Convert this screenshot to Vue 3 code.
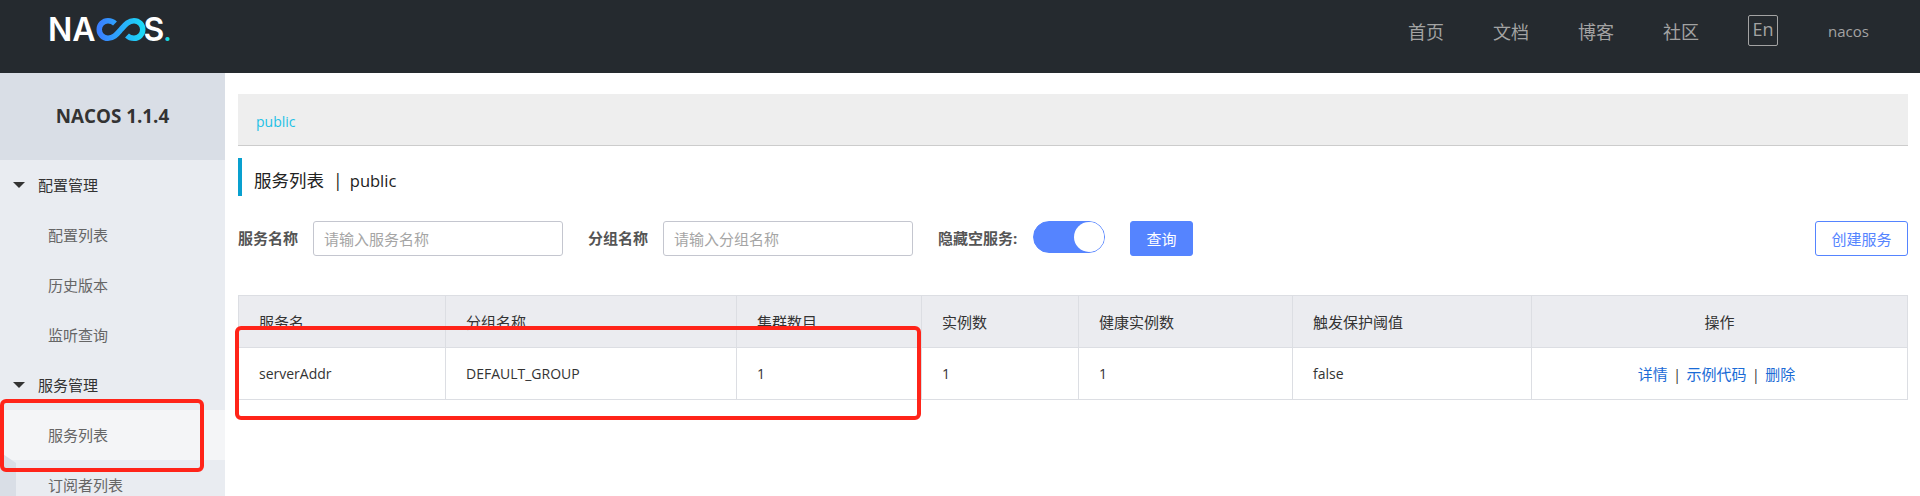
<template>
  <div class="page">
    <header class="topbar">
      <div class="logo">
        <span>NA</span>
        <svg class="logo-loop" width="50" height="23" viewBox="0 0 50 23" fill="none">
          <defs>
            <linearGradient id="loopGrad" x1="0" y1="0" x2="1" y2="0">
              <stop offset="0" stop-color="#3a7fff" />
              <stop offset="1" stop-color="#1bd8f6" />
            </linearGradient>
          </defs>
          <path d="M19 5.500C17 3.500 15 2.750 12 2.750A8.750 8.750 0 0 0 12 20.250C18 20.250 21 16 25 11.500C29 7 32 2.750 38 2.750A8.750 8.750 0 0 1 38 20.250C35 20.250 33 19.500 31 17.500" stroke="url(#loopGrad)" stroke-width="5.500" />
        </svg>
        <span>S</span><span class="logo-dot">.</span>
      </div>
      <nav class="topnav">
        <a v-for="item in topLinks" :key="item">{{ item }}</a>
        <span class="lang">En</span>
        <span class="user">nacos</span>
      </nav>
    </header>

    <div class="body">
      <aside class="sidebar">
        <div class="side-title">NACOS 1.1.4</div>
        <ul class="side-menu">
          <template v-for="group in menu" :key="group.name">
            <li class="group"><i class="caret"></i>{{ group.name }}</li>
            <li v-for="sub in group.items" :key="sub" class="sub" :class="{ active: sub === '服务列表' }">{{ sub }}</li>
          </template>
        </ul>
        <div class="fold"></div>
      </aside>

      <main class="main">
        <div class="crumb"><a>public</a></div>
        <h1 class="title">服务列表&nbsp; |&nbsp; <span class="title-ns">public</span></h1>

        <form class="filters" @submit.prevent>
          <label>服务名称</label>
          <input class="field" placeholder="请输入服务名称" />
          <label class="second">分组名称</label>
          <input class="field" placeholder="请输入分组名称" />
          <label class="third">隐藏空服务:</label>
          <span class="switch"><i></i></span>
          <button class="btn primary">查询</button>
          <button class="btn ghost">创建服务</button>
        </form>

        <table class="grid">
          <thead>
            <tr>
              <th v-for="col in columns" :key="col">{{ col }}</th>
            </tr>
          </thead>
          <tbody>
            <tr>
              <td>serverAddr</td>
              <td>DEFAULT_GROUP</td>
              <td>1</td>
              <td>1</td>
              <td>1</td>
              <td>false</td>
              <td class="ops">
                <a>详情</a><span class="sep">|</span><a>示例代码</a><span class="sep">|</span><a>删除</a>
              </td>
            </tr>
          </tbody>
        </table>
      </main>
    </div>

    <div class="mark mark-menu"></div>
    <div class="mark mark-row"></div>
  </div>
</template>

<script setup>
const topLinks = ['首页', '文档', '博客', '社区']

const menu = [
  { name: '配置管理', items: ['配置列表', '历史版本', '监听查询'] },
  { name: '服务管理', items: ['服务列表', '订阅者列表'] }
]

const columns = ['服务名', '分组名称', '集群数目', '实例数', '健康实例数', '触发保护阈值', '操作']
</script>

<style>
html,
body {
  margin: 0;
  background: #fff;
  overflow: hidden;
}
</style>

<style scoped>
.page {
  position: relative;
  height: 496px;
  overflow: hidden;
  font-family: "Open Sans", "Noto Sans CJK SC", sans-serif;
  font-size: 14px;
  color: #333;
}

.topbar {
  height: 73px;
  background: #252a2f;
  display: flex;
  justify-content: space-between;
  align-items: center;
}

.logo {
  display: flex;
  align-items: center;
  margin: 0 0 14px 48px;
  font-family: Inter, sans-serif;
  font-size: 32px;
  font-weight: 600;
  line-height: 23px;
  color: #fff;
}

.logo-loop {
  margin: 0 -2px 0 0;
}

.logo-dot {
  margin: 5px 0 0 -1px;
  color: #1bd8e0;
  font-size: 24px;
  font-weight: 700;
}

.topnav {
  display: flex;
  align-items: center;
  margin: 0 50px 12px 0;
  font-size: 18px;
  color: #a3a3a3;
}

.topnav a {
  width: 36px;
  margin-right: 49px;
  white-space: nowrap;
}

.lang {
  box-sizing: border-box;
  width: 30px;
  height: 31px;
  margin-right: 50px;
  border: 1px solid #a3a3a3;
  border-radius: 2px;
  text-align: center;
  line-height: 27px;
}

.user {
  width: 42px;
  font-size: 15px;
}

.body {
  display: flex;
}

.sidebar {
  position: relative;
  width: 225px;
  height: 423px;
  flex: none;
  background: #e9ecf1;
}

.side-title {
  height: 87px;
  background: #d9dee6;
  text-align: center;
  font-size: 18.800px;
  font-weight: 700;
  line-height: 87px;
  color: #333;
}

.side-menu {
  list-style: none;
  margin: 0;
  padding: 0;
}

.side-menu li {
  height: 50px;
  line-height: 50px;
  font-size: 15px;
  white-space: nowrap;
}

.group {
  padding-left: 38px;
  color: #333;
}

.caret {
  display: inline-block;
  width: 0;
  height: 0;
  margin: 0 13px 3px -25px;
  border-left: 6px solid transparent;
  border-right: 6px solid transparent;
  border-top: 6px solid #333;
}

.sub {
  padding-left: 48px;
  color: #666;
}

.sub.active {
  background: #f4f5f7;
}

.fold {
  position: absolute;
  left: 0;
  bottom: 0;
  width: 16px;
  height: 44px;
  background: #d9dee6;
  clip-path: polygon(0 0, 100% 25%, 100% 100%, 0 100%);
}

.main {
  flex: 1;
  min-width: 0;
  padding: 21px 12px 0 13px;
}

.crumb {
  height: 51px;
  padding: 0 18px;
  background: #eee;
  border-bottom: 1px solid #ccc;
  line-height: 56px;
  color: #1dc1e6;
}

.title {
  height: 38px;
  margin: 12px 0 25px;
  padding-left: 12px;
  border-left: 4px solid #09a0cf;
  font-size: 17.500px;
  font-weight: 400;
  line-height: 44px;
  color: #222;
}

.title-ns {
  margin-left: -2px;
  font-size: 16.500px;
}

.filters {
  display: flex;
  align-items: flex-start;
  height: 35px;
  margin-bottom: 39px;
}

.filters label {
  width: 60px;
  margin-right: 15px;
  font-size: 15px;
  font-weight: 700;
  line-height: 35px;
  color: #555;
  white-space: nowrap;
}

.filters .second {
  margin-left: 25px;
}

.filters .third {
  width: 80px;
  margin-left: 25px;
}

.field {
  box-sizing: border-box;
  width: 250px;
  height: 35px;
  padding: 0 10px;
  border: 1px solid #c4c6cf;
  border-radius: 3px;
  font: inherit;
  font-size: 15px;
  outline: none;
}

.field::placeholder {
  color: #a5a5a5;
}

.switch {
  box-sizing: border-box;
  display: flex;
  justify-content: flex-end;
  width: 72px;
  height: 32px;
  border: 1px solid #5584ff;
  border-radius: 16px;
  background: linear-gradient(90deg, #5584ff 80%, #fff 80%);
}

.switch i {
  width: 30px;
  height: 30px;
  border-radius: 50%;
  background: #fff;
}

.btn {
  box-sizing: border-box;
  height: 35px;
  border-radius: 3px;
  font: inherit;
  font-size: 15px;
  padding: 0;
}

.primary {
  width: 63px;
  margin-left: 25px;
  border: 1px solid #5584ff;
  background: #5584ff;
  color: #fff;
}

.ghost {
  width: 93px;
  margin-left: auto;
  border: 1px solid #5584ff;
  background: #fff;
  color: #5584ff;
}

.grid {
  width: 1670px;
  border-collapse: collapse;
  table-layout: fixed;
  font-size: 14px;
  color: #333;
}

.grid th,
.grid td {
  box-sizing: border-box;
  height: 52px;
  padding: 0 20px;
  border: 1px solid #dcdee3;
  text-align: left;
  font-weight: 400;
}

.grid th {
  background: #ebecf0;
  font-size: 15px;
}

.grid th:nth-child(1) { width: 207px; }
.grid th:nth-child(2) { width: 291px; }
.grid th:nth-child(3) { width: 185px; }
.grid th:nth-child(4) { width: 157px; }
.grid th:nth-child(5) { width: 214px; }
.grid th:nth-child(6) { width: 239px; }

.grid th:last-child,
.grid td:last-child {
  text-align: center;
}

.grid .ops {
  padding-right: 26px;
}

.grid td a {
  font-size: 15px;
  color: #1a6bd6;
}

.sep {
  margin: 0 5.500px;
  color: #333;
}

.mark {
  position: absolute;
  box-sizing: border-box;
  border: 4px solid #ff2419;
  border-radius: 6px;
}

.mark-menu {
  left: 0;
  top: 399px;
  width: 204px;
  height: 73px;
}

.mark-row {
  left: 235px;
  top: 326px;
  width: 686px;
  height: 94px;
}
</style>
